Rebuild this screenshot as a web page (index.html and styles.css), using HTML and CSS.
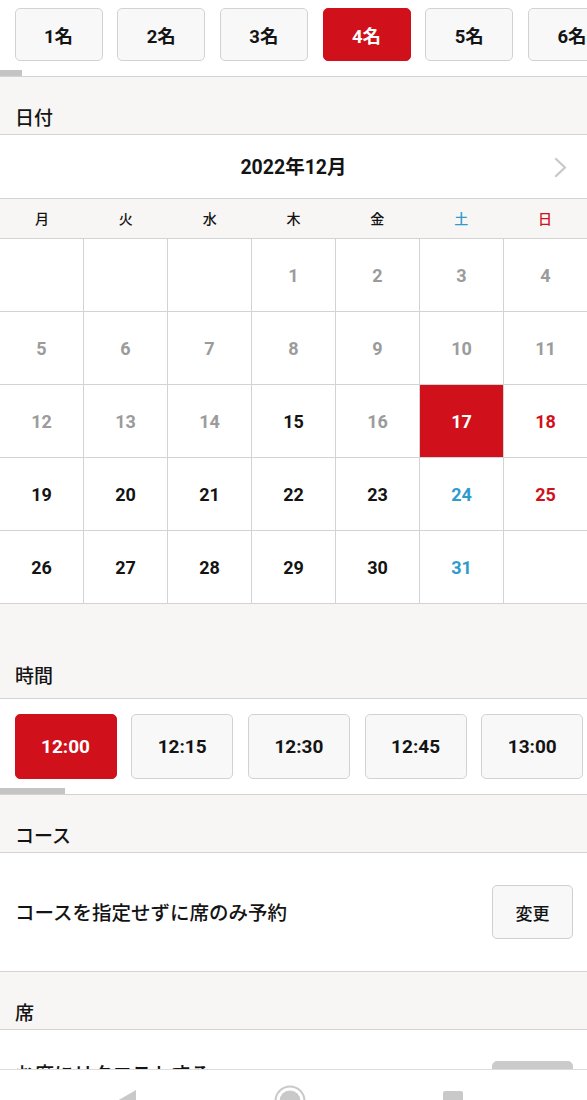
FILE: index.html
```html
<!DOCTYPE html>
<html lang="ja">
<head>
<meta charset="utf-8">
<title>予約</title>
<link rel="stylesheet" href="styles.css">
</head>
<body>
<div class="page">
  <section class="chips-block">
    <div class="chips party">
      <button class="chip">1名</button>
      <button class="chip">2名</button>
      <button class="chip">3名</button>
      <button class="chip is-active">4名</button>
      <button class="chip">5名</button>
      <button class="chip">6名</button>
    </div>
    <div class="scroll-thumb thumb-party"></div>
  </section>

  <h2 class="section-head">日付</h2>

  <section class="calendar">
    <div class="cal-head">
      <span></span>
      <span class="cal-title">2022年12月</span>
      <span class="cal-next">
        <svg width="13" height="21" viewBox="0 0 13 21"><polyline points="2,2 11,10.5 2,19" fill="none" stroke="#c9c9c9" stroke-width="2.4" stroke-linecap="round" stroke-linejoin="round"/></svg>
      </span>
    </div>
    <div class="weekdays">
      <span>月</span><span>火</span><span>水</span><span>木</span><span>金</span><span class="sat">土</span><span class="sun">日</span>
    </div>
    <div class="days">
      <span class="day"></span><span class="day"></span><span class="day"></span><span class="day off">1</span><span class="day off">2</span><span class="day off">3</span><span class="day off">4</span>
      <span class="day off">5</span><span class="day off">6</span><span class="day off">7</span><span class="day off">8</span><span class="day off">9</span><span class="day off">10</span><span class="day off">11</span>
      <span class="day off">12</span><span class="day off">13</span><span class="day off">14</span><span class="day">15</span><span class="day off">16</span><span class="day selected">17</span><span class="day sun">18</span>
      <span class="day">19</span><span class="day">20</span><span class="day">21</span><span class="day">22</span><span class="day">23</span><span class="day sat">24</span><span class="day sun">25</span>
      <span class="day">26</span><span class="day">27</span><span class="day">28</span><span class="day">29</span><span class="day">30</span><span class="day sat">31</span><span class="day"></span>
    </div>
  </section>

  <h2 class="section-head tall">時間</h2>

  <section class="chips-block times-block">
    <div class="chips times">
      <button class="chip time is-active">12:00</button>
      <button class="chip time">12:15</button>
      <button class="chip time">12:30</button>
      <button class="chip time">12:45</button>
      <button class="chip time">13:00</button>
    </div>
    <div class="scroll-thumb thumb-time"></div>
  </section>

  <h2 class="section-head">コース</h2>

  <section class="option-row">
    <p class="option-text">コースを指定せずに席のみ予約</p>
    <button class="change-btn">変更</button>
  </section>

  <h2 class="section-head">席</h2>

  <section class="option-row seat-row">
    <p class="option-text">お席にリクエストする</p>
    <button class="change-btn disabled"></button>
  </section>
</div>

<nav class="system-nav">
  <span class="nav-slot">
    <svg width="19" height="22" viewBox="0 0 19 22"><polygon points="19,0 19,22 0,11" fill="#c9c9c9"/></svg>
  </span>
  <span class="nav-slot">
    <svg width="32" height="32" viewBox="0 0 32 32"><circle cx="16" cy="16" r="14.5" fill="none" stroke="#c9c9c9" stroke-width="2"/><circle cx="16" cy="16" r="10.5" fill="#c9c9c9"/></svg>
  </span>
  <span class="nav-slot">
    <svg width="20" height="20" viewBox="0 0 20 20"><rect x="0" y="0" width="20" height="20" rx="2" fill="#c9c9c9"/></svg>
  </span>
</nav>
</body>
</html>
```

FILE: styles.css
```css
* { box-sizing: border-box; }

html, body {
  margin: 0;
  padding: 0;
  background: #f7f6f4;
}

body {
  font-family: Roboto, "Noto Sans CJK JP", sans-serif;
  color: #141414;
  width: 587px;
  overflow: hidden;
}

.page {
  display: flex;
  flex-direction: column;
}

/* horizontal chip rows */
.chips-block {
  background: #fff;
  border-bottom: 1px solid #d3d3d3;
  padding-top: 8px;
  overflow: hidden;
}

.chips {
  display: flex;
  gap: 14.7px;
  padding-left: 14.5px;
  overflow: hidden;
}

.chip {
  flex: 0 0 88px;
  height: 53px;
  border: 1px solid #d2d2d2;
  border-radius: 5px;
  background: #f8f8f8;
  font-family: Roboto, "Noto Sans CJK JP", sans-serif;
  font-size: 18.5px;
  font-weight: 700;
  color: #141414;
  padding: 0;
}

.chip.is-active {
  background: #d0111b;
  border-color: #d0111b;
  color: #fff;
}

.scroll-thumb {
  height: 6px;
  background: #c4c4c4;
  margin-top: 9px;
}

.thumb-party { width: 22px; }

.times-block { padding-top: 15px; }

.chip.time {
  flex: 0 0 102px;
  height: 65px;
  font-size: 19px;
}

.thumb-time { width: 65px; }

/* section headers */
.section-head {
  margin: 0;
  height: 58px;
  display: flex;
  align-items: flex-end;
  padding: 0 0 2px 15px;
  font-size: 19px;
  line-height: 27px;
  font-weight: 500;
  background: #f7f6f4;
  border-bottom: 1px solid #d3d3d3;
}

.section-head.tall {
  height: 95px;
  padding-bottom: 8px;
}

/* calendar */
.calendar { background: #fff; }

.cal-head {
  display: grid;
  grid-template-columns: 1fr auto 1fr;
  align-items: center;
  height: 64px;
  border-bottom: 1px solid #d3d3d3;
}

.cal-title {
  font-size: 19.5px;
  font-weight: 700;
  margin-bottom: 2px;
}

.cal-next {
  justify-self: end;
  margin-right: 20px;
  display: flex;
  margin-top: 2px;
}

.weekdays {
  display: grid;
  grid-template-columns: repeat(7, 1fr);
  height: 40px;
  align-items: center;
  background: #f7f6f4;
  border-bottom: 1px solid #d3d3d3;
  text-align: center;
  font-size: 14px;
  font-weight: 500;
  padding-bottom: 1px;
}

.sat { color: #2f9bcc; }
.sun { color: #d0111b; }

.days {
  display: grid;
  grid-template-columns: repeat(7, 1fr);
  grid-auto-rows: 72px;
  gap: 1px;
  background: #d3d3d3;
  border-bottom: 1px solid #d3d3d3;
}

.day {
  background: #fff;
  display: flex;
  align-items: center;
  justify-content: center;
  font-size: 18px;
  font-weight: 700;
  color: #141414;
}

.day.off { color: #9b9b9b; }
.day.sat { color: #2f9bcc; }
.day.sun { color: #d0111b; }

.day.selected {
  background: #d0111b;
  color: #fff;
}

/* option rows */
.option-row {
  background: #fff;
  height: 119px;
  display: flex;
  align-items: center;
  justify-content: space-between;
  padding: 0 14px 0 15px;
  border-bottom: 1px solid #d3d3d3;
}

.option-text {
  margin: 0 0 2px;
  font-size: 19.5px;
  font-weight: 500;
}

.change-btn {
  width: 81px;
  height: 54px;
  border: 1px solid #cfcfcf;
  border-radius: 5px;
  background: #f8f8f8;
  font-family: Roboto, "Noto Sans CJK JP", sans-serif;
  font-size: 17px;
  font-weight: 500;
  color: #141414;
  padding: 0;
}

.change-btn.disabled {
  background: #cbcbcb;
  border-color: #cbcbcb;
}

.seat-row {
  align-items: flex-start;
  padding-top: 31px;
}

.seat-row .option-text { margin-top: -3px; }

/* system nav bar overlay */
.system-nav {
  position: fixed;
  left: 0;
  right: 0;
  bottom: -31px;
  height: 62px;
  background: #fff;
  border-top: 1px solid #dcdcdc;
  display: grid;
  grid-template-columns: repeat(3, 163px);
  justify-content: center;
  align-items: center;
  padding-right: 8px;
}

.nav-slot {
  display: flex;
  justify-content: center;
  align-items: center;
}
```
